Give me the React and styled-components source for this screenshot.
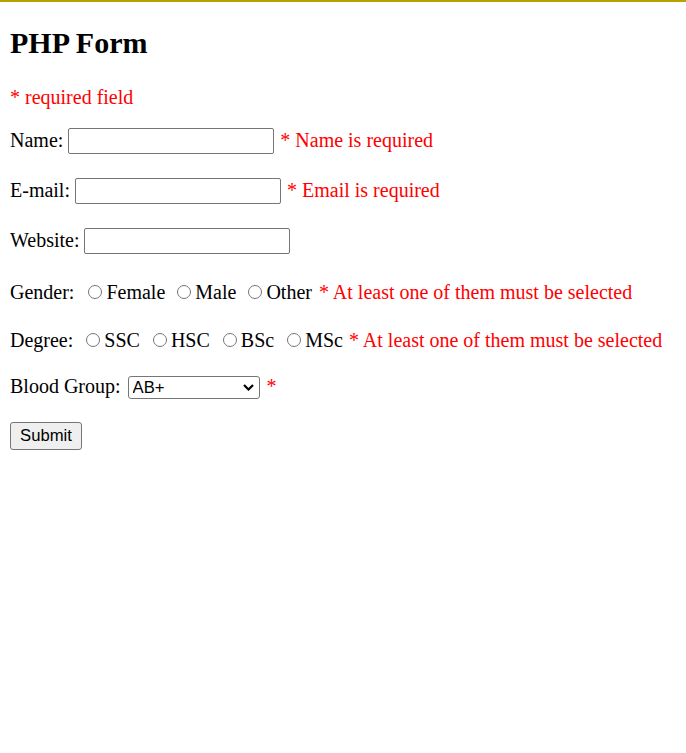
import React from "react";
import styled, { createGlobalStyle } from "styled-components";

const Global = createGlobalStyle`
  html, body { margin: 0; padding: 0; background: #fff; }
  body { font-family: "Liberation Serif", "Times New Roman", serif; font-size: 20px; color: #000; }
`;

const Page = styled.div`
  border-top: 2px solid #b5a100;
  padding: 0 10px;
`;

const Title = styled.h2`
  font-size: 30px;
  line-height: 34px;
  font-weight: bold;
  margin: 24px 0 0;
`;

const Note = styled.p`
  color: #ff0000;
  line-height: 23px;
  margin: 25.5px 0 0;
`;

const Form = styled.form`
  display: block;
`;

const Row = styled.div`
  display: flex;
  align-items: baseline;
  line-height: 23px;
  margin-top: ${(p) => p.$top}px;
  white-space: pre;
`;

const Label = styled.span`
  margin-right: ${(p) => p.$gap ?? 5}px;
`;

const TextInput = styled.input`
  box-sizing: border-box;
  width: 206px;
  height: 26px;
  border: 1px solid #767676;
  border-radius: 2px;
  padding: 2px 2px 0;
  margin: 0;
  font-family: Arial, "Liberation Sans", sans-serif;
  font-size: 16.67px;
  background: #fff;
`;

const Error = styled.span`
  color: #ff0000;
  margin-left: ${(p) => p.$gap ?? 6}px;
`;

const Radio = styled.input`
  appearance: none;
  -webkit-appearance: none;
  box-sizing: border-box;
  width: 14px;
  height: 14px;
  border: 1px solid #767676;
  border-radius: 50%;
  background: #fff;
  margin: 3px 4px 0 ${(p) => p.$left}px;
  &:checked {
    background: radial-gradient(circle, #0075ff 0 3px, #fff 3.5px);
    border-color: #0075ff;
  }
`;

const SelectWrap = styled.span`
  position: relative;
  display: inline-flex;
  margin-left: 7px;
`;

const Select = styled.select`
  box-sizing: border-box;
  appearance: none;
  -webkit-appearance: none;
  width: 132px;
  height: 23px;
  margin: 0;
  padding: 0 20px 0 4px;
  font-family: Arial, "Liberation Sans", sans-serif;
  font-size: 16.67px;
  line-height: 21px;
  border: 1px solid #767676;
  border-radius: 3px;
  background: #fff;
  color: #000;
`;

const Chevron = styled.svg`
  position: absolute;
  right: 6px;
  top: 8px;
  width: 11px;
  height: 7px;
  pointer-events: none;
`;

const Button = styled.button`
  box-sizing: border-box;
  width: 72px;
  height: 28px;
  margin: 0;
  padding: 0;
  font-family: Arial, "Liberation Sans", sans-serif;
  font-size: 16.67px;
  color: #000;
  background: #efefef;
  border: 1px solid #767676;
  border-radius: 3px;
`;

const RadioLabel = styled.span``;

function RadioGroup({ label, name, options, first, gaps }) {
  return (
    <>
      <Label $gap={0}>{label}</Label>
      {options.map((o, i) => (
        <React.Fragment key={o}>
          <Radio type="radio" name={name} $left={i === 0 ? first : gaps} />
          <RadioLabel>{o}</RadioLabel>
        </React.Fragment>
      ))}
    </>
  );
}

export default function App() {
  return (
    <>
      <Global />
      <Page>
        <Title>PHP Form</Title>
        <Note>* required field</Note>
        <Form onSubmit={(e) => e.preventDefault()}>
          <Row $top={19}>
            <Label>Name:</Label>
            <TextInput type="text" />
            <Error>* Name is required</Error>
          </Row>
          <Row $top={24}>
            <Label>E-mail:</Label>
            <TextInput type="text" />
            <Error>* Email is required</Error>
          </Row>
          <Row $top={24.5}>
            <Label>Website:</Label>
            <TextInput type="text" />
          </Row>
          <Row $top={26.5}>
            <RadioGroup
              label="Gender:"
              name="gender"
              options={["Female", "Male", "Other"]}
              first={14}
              gaps={12}
            />
            <Error $gap={7}>* At least one of them must be selected</Error>
          </Row>
          <Row $top={25.4}>
            <RadioGroup
              label="Degree:"
              name="degree"
              options={["SSC", "HSC", "BSc", "MSc"]}
              first={13}
              gaps={13}
            />
            <Error $gap={6}>* At least one of them must be selected</Error>
          </Row>
          <Row $top={23}>
            <Label $gap={0}>Blood Group:</Label>
            <SelectWrap>
              <Select defaultValue="AB+">
                <option>A+</option>
                <option>A-</option>
                <option>B+</option>
                <option>B-</option>
                <option>O+</option>
                <option>O-</option>
                <option>AB+</option>
                <option>AB-</option>
              </Select>
              <Chevron viewBox="0 0 11 7" aria-hidden="true">
                <path d="M1 1 L5.5 5.5 L10 1" fill="none" stroke="#000" strokeWidth="2.2" />
              </Chevron>
            </SelectWrap>
            <Error $gap={7}>*</Error>
          </Row>
          <Row $top={23}>
            <Button type="submit">Submit</Button>
          </Row>
        </Form>
      </Page>
    </>
  );
}
